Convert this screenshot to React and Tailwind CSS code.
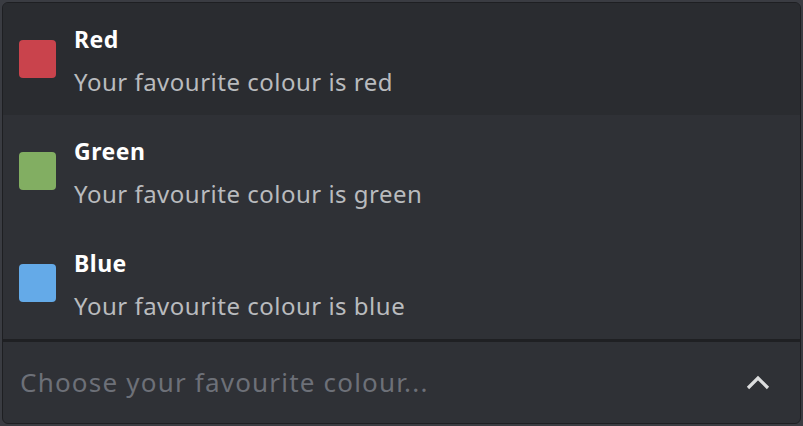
import React from 'react';

const options = [
  { label: 'Red', description: 'Your favourite colour is red', color: 'bg-[#c9434c]', active: true },
  { label: 'Green', description: 'Your favourite colour is green', color: 'bg-[#82ae62]' },
  { label: 'Blue', description: 'Your favourite colour is blue', color: 'bg-[#64aae8]' },
];

const App = () => {
  return (
    <div className="w-[803px] h-[426px] bg-[#3a3c42] p-[2px] font-['Noto_Sans',sans-serif]">
      <div className="h-full flex flex-col rounded-[6px] border border-[#1e1f22] bg-[#2f3136] overflow-hidden">
        {/* Options */}
        {options.map((opt) => (
          <div
            key={opt.label}
            className={`h-[112px] flex items-center gap-[18px] pl-[16px] ${opt.active ? 'bg-[#2a2c30]' : 'bg-[#2f3136]'}`}
          >
            <div className={`w-[37px] h-[38px] rounded-[4px] ${opt.color}`} />
            <div className="flex flex-col gap-[16px] mt-[4px]">
              <span className="text-[23px] leading-[26px] font-bold tracking-[0.5px] text-white">{opt.label}</span>
              <span className="text-[24px] leading-[28px] tracking-[0.5px] text-[#b9bbbe]">{opt.description}</span>
            </div>
          </div>
        ))}

        <div className="h-[3px] bg-[#1f2023]" />

        {/* Select */}
        <div className="flex-1 flex items-center justify-between pl-[17px] pr-[30px]">
          <span className="text-[26px] tracking-[1.2px] text-[#6d7078]">Choose your favourite colour...</span>
          <svg width="24" height="16" viewBox="0 0 24 16" fill="none">
            <path d="M2 13 L12 3 L22 13" stroke="#dcddde" strokeWidth="3.2" />
          </svg>
        </div>
      </div>
    </div>
  );
};

export default App;
